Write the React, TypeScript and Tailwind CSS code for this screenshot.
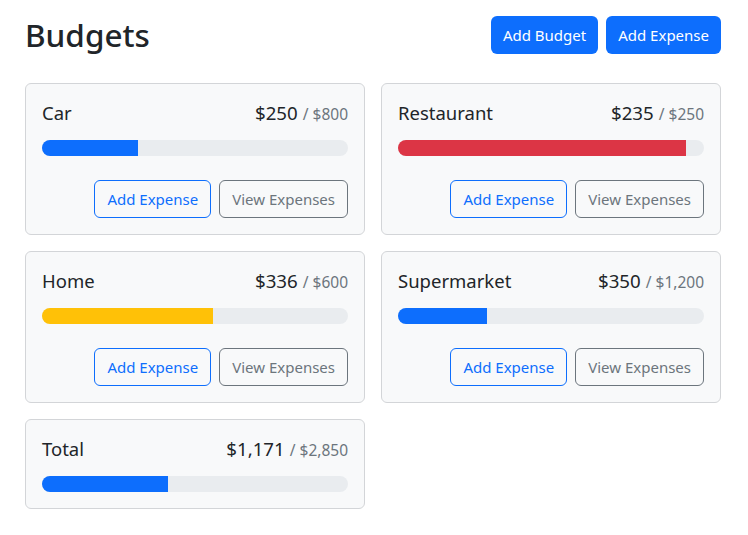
import React from 'react';

type Budget = {
  name: string;
  spent: number;
  max: number;
  color: string;
  actions?: boolean;
};

const budgets: Budget[] = [
  { name: 'Car', spent: 250, max: 800, color: 'bg-[#0d6efd]', actions: true },
  { name: 'Restaurant', spent: 235, max: 250, color: 'bg-[#dc3545]', actions: true },
  { name: 'Home', spent: 336, max: 600, color: 'bg-[#ffc107]', actions: true },
  { name: 'Supermarket', spent: 350, max: 1200, color: 'bg-[#0d6efd]', actions: true },
  { name: 'Total', spent: 1171, max: 2850, color: 'bg-[#0d6efd]' },
];

const money = (n: number) => '$' + n.toLocaleString('en-US');

function BudgetCard({ b }: { b: Budget }) {
  const pct = Math.min(100, (b.spent / b.max) * 100);
  return (
    <div className="rounded-[6px] border border-[#d3d5d8] bg-[#f8f9fa] p-4">
      <div className="flex h-6 items-baseline justify-between pt-[1px] leading-6 text-[#212529]">
        <div className="text-[18.5px]">{b.name}</div>
        <div className="flex items-baseline text-[18.7px]">
          {money(b.spent)}
          <span className="ml-[5px] text-[15.5px] text-[#6c757d]">/ {money(b.max)}</span>
        </div>
      </div>
      <div className="mt-4 h-4 overflow-hidden rounded-full bg-[#e9ecef]">
        <div className={`h-full ${b.color}`} style={{ width: `${pct}%` }} />
      </div>
      {b.actions && (
        <div className="mt-6 flex justify-end gap-2">
          <button className="h-[38px] rounded-[6px] border border-[#0d6efd] px-3 text-[15px] text-[#0d6efd]">
            Add Expense
          </button>
          <button className="h-[38px] rounded-[6px] border border-[#6c757d] px-3 text-[15px] text-[#6c757d]">
            View Expenses
          </button>
        </div>
      )}
    </div>
  );
}

export default function App() {
  return (
    <div
      className="min-h-screen bg-white pl-[25px] pr-[27px] pt-4 text-[#212529]"
      style={{ fontFamily: '"Noto Sans", "Open Sans", sans-serif' }}
    >
      <div className="flex h-[38px] items-center justify-between">
        <h1 className="text-[31.5px] font-medium leading-[38px]">Budgets</h1>
        <div className="flex gap-2">
          <button className="h-[38px] rounded-[6px] bg-[#0d6efd] px-3 text-[15px] text-white">
            Add Budget
          </button>
          <button className="h-[38px] rounded-[6px] bg-[#0d6efd] px-3 text-[15px] text-white">
            Add Expense
          </button>
        </div>
      </div>
      <div className="mt-[29px] grid grid-cols-2 gap-4">
        {budgets.map(b => (
          <BudgetCard key={b.name} b={b} />
        ))}
      </div>
    </div>
  );
}
